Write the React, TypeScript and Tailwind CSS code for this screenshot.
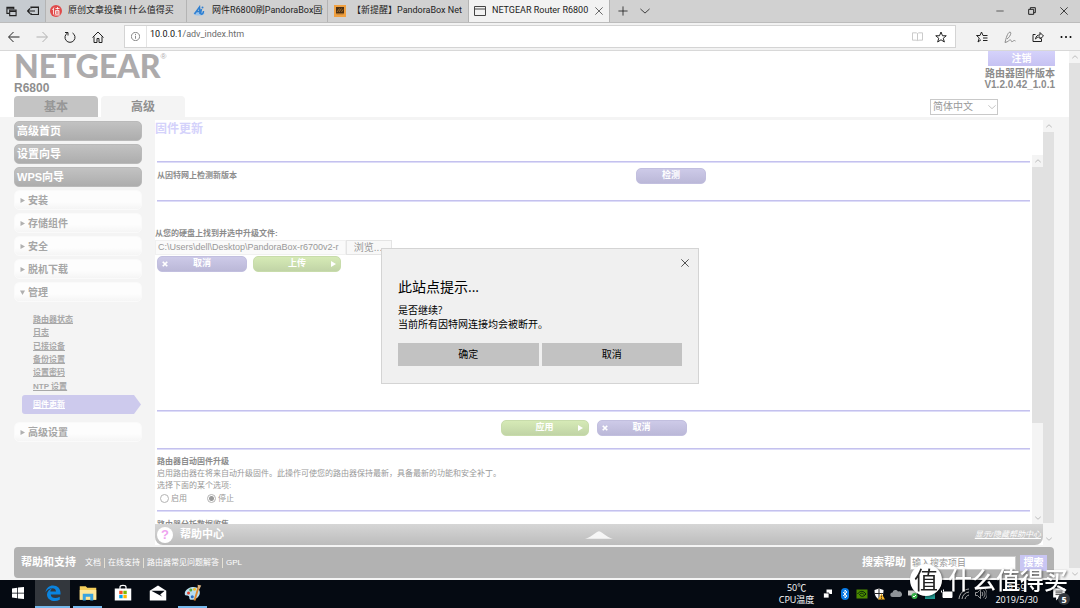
import React from "react";

const SANS = "font-['Liberation_Sans','Noto_Sans_CJK_SC',sans-serif]";
const UI = "font-['Open_Sans','Noto_Sans_CJK_SC',sans-serif]";

type IconProps = { className?: string; children: React.ReactNode; box?: string };
function Icon({ className = "", children, box = "0 0 24 24" }: IconProps) {
  return (
    <svg viewBox={box} className={`shrink-0 ${className}`} fill="none" stroke="currentColor" strokeWidth={2} aria-hidden="true">
      {children}
    </svg>
  );
}

/* ---------- browser chrome ---------- */

function Tab({ icon, title, active }: { icon: React.ReactNode; title: string; active?: boolean }) {
  return (
    <button
      className={`flex h-full w-[141px] shrink-0 items-center gap-1.5 overflow-hidden border-r border-[#b4b4b4] text-left font-['Roboto','Noto_Sans_CJK_SC',sans-serif] text-[9px] whitespace-nowrap text-[#222] ${
        active ? "bg-[#f2f2f2] pr-1.5 pl-1" : "pr-1 pl-1"
      }`}
    >
      {icon}
      <span className="min-w-0 flex-1 overflow-hidden">{title}</span>
      {active && (
        <Icon className="size-2">
          <path d="M1 1l22 22M23 1L1 23" />
        </Icon>
      )}
    </button>
  );
}

function TitleBar() {
  return (
    <div className="flex h-[23px] shrink-0 items-stretch border-b border-[#bcbcbc] bg-[#d1d1d1] text-[#222]">
      <div className="flex w-[46px] shrink-0 items-center justify-between border-r border-[#b4b4b4] bg-[#c6cbd0] px-1.5">
        <button aria-label="已搁置的标签页">
          <Icon className="size-[11px]">
            <path d="M7 16H2V3h15v4M2 6h15" strokeWidth={2.4} />
            <path d="M8 9h14v12H8zM8 12h14" strokeWidth={2.4} />
          </Icon>
        </button>
        <button aria-label="搁置标签页">
          <Icon className="size-3">
            <path d="M8 7V4h15v15H8v-3M8 5h15M16 12H1M6 7l-5 5 5 5" strokeWidth={2.4} />
          </Icon>
        </button>
      </div>
      <Tab
        title="原创文章投稿 | 什么值得买"
        icon={
          <svg viewBox="0 0 24 24" className="size-3 shrink-0" aria-hidden="true">
            <circle cx="12" cy="12" r="12" fill="#e04a4a" />
            <path d="M8 5L5 10m2-2v11M11 7h8M15 4v5M11 11h7v7h-7zM11 14h7M9 20h11" stroke="#fff" strokeWidth="1.6" fill="none" />
          </svg>
        }
      />
      <Tab
        title="网件R6800刷PandoraBox固件"
        icon={
          <svg viewBox="0 0 24 24" className="mr-px ml-0.5 size-3 shrink-0" aria-hidden="true">
            <ellipse cx="12" cy="17" rx="11" ry="4" fill="#9cc3ea" />
            <path d="M3 18L13 4l1 14M7 13h6M17 8l-2 9c3 3 6 0 6-5" stroke="#2f7fd0" strokeWidth="3" fill="none" />
            <circle cx="19" cy="5" r="2" fill="#2f7fd0" />
          </svg>
        }
      />
      <Tab
        title="【新提醒】PandoraBox Net"
        icon={
          <svg viewBox="0 0 24 24" className="ml-0.5 size-3 shrink-0" aria-hidden="true">
            <path fill="#f0a040" d="M0 0h24v24H0z" />
            <path fill="#4b3014" d="M4 4h16v13H4z" />
            <path d="M6 14l5-7m-1 7l5-7m0 7l3-5M5 19h14" stroke="#c98734" strokeWidth="1.4" />
          </svg>
        }
      />
      <Tab
        active
        title="NETGEAR Router R6800"
        icon={
          <Icon className="ml-px size-3 text-[#444]">
            <path d="M1 3h22v18H1zM1 8h22" />
          </Icon>
        }
      />
      <div className="flex items-center gap-3 px-2">
        <button aria-label="新建标签页">
          <Icon className="size-2.5">
            <path d="M12 1v22M1 12h22" />
          </Icon>
        </button>
        <button aria-label="标签页预览">
          <Icon className="size-2.5">
            <path d="M1 7l11 10L23 7" />
          </Icon>
        </button>
      </div>
      <div className="ml-auto flex items-center gap-6 pr-3">
        <button aria-label="最小化">
          <Icon className="size-2">
            <path d="M1 12h22" />
          </Icon>
        </button>
        <button aria-label="向下还原">
          <Icon className="size-2">
            <path d="M2 7h15v15H2zM7 7V2h15v15h-5" strokeWidth={3} />
          </Icon>
        </button>
        <button aria-label="关闭">
          <Icon className="size-2">
            <path d="M1 1l22 22M23 1L1 23" strokeWidth={2.5} />
          </Icon>
        </button>
      </div>
    </div>
  );
}

function Toolbar() {
  return (
    <div className="flex h-7 shrink-0 items-center border-b border-[#d8d8d8] bg-[#f2f2f2] text-[#222]">
      <div className="flex w-[124px] shrink-0 items-center gap-4 pl-2">
        <button aria-label="后退">
          <Icon className="size-3">
            <path d="M23 12H2M11 2L1 12l10 10" />
          </Icon>
        </button>
        <button aria-label="前进" className="text-[#b0b0b0]">
          <Icon className="size-3">
            <path d="M1 12h21M13 2l10 10-10 10" />
          </Icon>
        </button>
        <button aria-label="刷新">
          <Icon className="size-3">
            <path d="M7 4a10 10 0 1 0 10 0M2 3h6v6" />
          </Icon>
        </button>
        <button aria-label="主页">
          <Icon className="size-3">
            <path d="M1 13L12 2l11 11M4 11v12h6v-8h4v8h6V11" />
          </Icon>
        </button>
      </div>
      <div className="flex h-[23px] flex-1 items-center gap-1.5 border border-[#d4d4d4] bg-white pr-2 pl-1.5">
        <Icon className="size-[9px] text-[#666]">
          <circle cx="12" cy="12" r="11" />
          <path d="M12 10v8M12 5v3" />
        </Icon>
        <div className="flex h-full flex-1 items-center border-l border-[#e4e4e4] pb-1 pl-[3px] font-['Roboto',sans-serif] text-[9px] text-[#6c6c6c]">
          <span className="text-[#111]">10.0.0.1</span>/adv_index.htm
        </div>
        <button aria-label="阅读视图" className="text-[#c4c4c4]">
          <Icon className="size-[11px]">
            <path d="M1 4h9l2 2 2-2h9v16h-9l-2 2-2-2H1zM12 6v15" />
          </Icon>
        </button>
        <button aria-label="添加到收藏夹" className="ml-1.5">
          <Icon className="size-3">
            <path d="M12 2l3 7.500h7.500l-6 5 2.200 7.500L12 17.500 5.300 22l2.200-7.500-6-5H9z" />
          </Icon>
        </button>
      </div>
      <div className="flex w-[124px] shrink-0 items-center justify-between pr-2 pl-5">
        <button aria-label="收藏夹">
          <Icon className="size-3">
            <path d="M16 9h-2l-3-7-3 7H1l5.500 5L4 22l6-4.500M14 9h9M14 14h9M14 19h9" />
          </Icon>
        </button>
        <button aria-label="添加笔记" className="text-[#8c8c8c]">
          <Icon className="size-3">
            <path d="M2 23C4 15 7 3 12 2c4 1 0 10-6 14M2 23c7-1 8-6 11-5s1 5 4 3 3-3 6-1" strokeWidth={2} />
          </Icon>
        </button>
        <button aria-label="共享">
          <Icon className="size-3">
            <path d="M7 7H2v14h17v-6M7 16c1-6 4-8 9-8V3l7 7-7 6v-4c-4 0-6 1-9 4z" />
          </Icon>
        </button>
        <button aria-label="设置及更多">
          <svg viewBox="0 0 24 24" className="size-3" aria-hidden="true">
            <circle cx="3" cy="12" r="2" />
            <circle cx="12" cy="12" r="2" />
            <circle cx="21" cy="12" r="2" />
          </svg>
        </button>
      </div>
    </div>
  );
}

/* ---------- shared pieces ---------- */

function ScrollBar({ thumb, rest, className = "" }: { thumb: string; rest: string; className?: string }) {
  return (
    <div className={`flex w-[11px] shrink-0 flex-col bg-[#f4f4f4] text-[#bdbdbd] ${className}`} aria-hidden="true">
      <div className="flex h-3 items-center justify-center">
        <Icon className="size-1.5">
          <path d="M1 17L12 7l11 10" strokeWidth={4} />
        </Icon>
      </div>
      <div className={`bg-[#e1e1e1] ${thumb}`} />
      <div className={rest} />
      <div className="flex h-3 items-center justify-center">
        <Icon className="size-1.5">
          <path d="M1 7l11 10L23 7" strokeWidth={4} />
        </Icon>
      </div>
    </div>
  );
}

function PillButton({ label, tone, mark, className }: { label: string; tone: "purple" | "green"; mark?: "x" | "play"; className: string }) {
  return (
    <button
      className={`flex h-4 items-center rounded-[5px] border px-[3px] text-[9px] font-bold text-white ${
        tone === "purple"
          ? "border-[#c2bfdf] bg-linear-to-b from-[#cdcae8] to-[#bbb8d8]"
          : "border-[#c8dcab] bg-linear-to-b from-[#d6eab6] to-[#c1d4a6]"
      } ${className}`}
    >
      <span className="flex w-2 justify-center">
        {mark === "x" && (
          <Icon className="size-1.5">
            <path d="M3 3l18 18M21 3L3 21" strokeWidth={7} />
          </Icon>
        )}
      </span>
      <span className="flex-1 text-center">{label}</span>
      <span className="flex w-2 justify-center">
        {mark === "play" && (
          <svg viewBox="0 0 10 12" className="h-1.5 w-[5px]" fill="currentColor" aria-hidden="true">
            <path d="M0 0l10 6-10 6z" />
          </svg>
        )}
      </span>
    </button>
  );
}

const Rule = () => <hr className="h-0.5 shrink-0 border-0 border-t border-b border-t-[#c4c1ee] border-b-[#dddcf8]" />;

/* ---------- router page ---------- */

function RouterHeader() {
  return (
    <header className="flex h-[66px] shrink-0 justify-between bg-white pr-3.5 pl-3.5">
      <div className="flex flex-col">
        <div className="flex items-start text-[#adabac]">
          <span className="font-['Lato',sans-serif] text-[32px] leading-[30px] font-black">NETGEAR</span>
          <span className="pt-0.5 text-[8px] leading-[8px]">®</span>
        </div>
        <div className="text-[12px] leading-[14px] font-bold text-[#8f8f8f]">R6800</div>
        <nav className="mt-auto flex gap-[3px] text-[12px] font-bold">
          <a href="#basic" className="flex h-[21px] w-[84px] items-center justify-center rounded-t bg-[#c4c4c4] text-[#979797]">
            基本
          </a>
          <a href="#advanced" className="flex h-[21px] w-[84px] items-center justify-center rounded-t bg-[#f4f4f4] text-[#8f8f8f]">
            高级
          </a>
        </nav>
      </div>
      <div className="flex flex-col items-end text-[10px] leading-[11px] font-bold text-[#8c8c8c]">
        <button className="mb-0.5 h-[15px] w-[67px] bg-linear-to-b from-[#d5d2fb] to-[#c6c2f2] text-white">注销</button>
        <div>路由器固件版本</div>
        <div>V1.2.0.42_1.0.1</div>
        <div className="relative mt-auto mr-[57px] mb-0.5 flex items-center">
          <select aria-label="语言" className="h-4 w-[68px] appearance-none border border-[#c9c9c9] bg-white pl-0.5 text-[10px] leading-[14px] font-normal text-[#999] outline-none">
            <option>简体中文</option>
          </select>
          <Icon className="pointer-events-none absolute right-0.5 size-2 text-[#aaa]">
            <path d="M1 7l11 10L23 7" />
          </Icon>
        </div>
      </div>
    </header>
  );
}

function MenuItem({ label, open }: { label: string; open?: boolean }) {
  return (
    <a href="#menu" className="flex h-5 items-center gap-[3px] rounded-[5px] border border-[#fafafa] bg-linear-to-b from-[#fdfdfd] from-60% to-[#f5f5f5] pl-[5px] text-[10px] font-bold text-[#a6a6a6]">
      <svg viewBox="0 0 10 10" className="size-[5px] shrink-0" fill="#b0b0b0" aria-hidden="true">
        <path d={open ? "M0 1h10L5 10z" : "M1 0l9 5-9 5z"} />
      </svg>
      {label}
    </a>
  );
}

function Sidebar() {
  return (
    <aside className="w-[155px] shrink-0 pt-1 pr-[13px] pl-3.5">
      <nav className="flex flex-col gap-[3px]">
        {["高级首页", "设置向导", "WPS向导"].map((t) => (
          <a key={t} href="#top" className="flex h-5 items-center rounded-[5px] border border-[#bababa] bg-linear-to-b from-[#c2c2c2] to-[#adadad] pl-0.5 text-[11px] font-bold text-white">
            {t}
          </a>
        ))}
        {["安装", "存储组件", "安全", "脱机下载"].map((t) => (
          <MenuItem key={t} label={t} />
        ))}
        <MenuItem label="管理" open />
      </nav>
      <div className="grid h-[91px] grid-rows-6 pt-[11px] pl-[19px] text-[8px] leading-[13px] font-bold text-[#a8a8a8] underline">
        {["路由器状态", "日志", "已接设备", "备份设置", "设置密码", "NTP 设置"].map((t) => (
          <a key={t} href="#sub">
            {t}
          </a>
        ))}
      </div>
      <a
        href="#firmware"
        className="mt-0.5 mr-px ml-2 flex h-[19px] items-center rounded-l-[3px] bg-[#cdcaed] pl-[11px] text-[8px] font-bold text-white underline [clip-path:polygon(0_0,calc(100%-7px)_0,100%_50%,calc(100%-7px)_100%,0_100%)]"
      >
        固件更新
      </a>
      <div className="pt-2">
        <MenuItem label="高级设置" />
      </div>
    </aside>
  );
}

function FirmwarePage() {
  return (
    <div className="flex min-h-0 flex-1 text-[8px] text-[#8c8c8c]">
      <div className="flex min-w-0 flex-1 flex-col overflow-hidden pt-1.5 pr-0.5 pl-0.5">
        <Rule />
        <section className="grid h-[37px] shrink-0 grid-cols-[479fr_394fr] items-start pt-[5px]">
          <span className="leading-4 font-bold">从因特网上检测新版本</span>
          <PillButton label="检测" tone="purple" className="w-[70px]" />
        </section>
        <Rule />
        <section className="-ml-0.5 flex h-[208px] shrink-0 flex-col pt-[25px]">
          <label htmlFor="fw" className="leading-[13px] font-bold">
            从您的硬盘上找到并选中升级文件:
          </label>
          <div className="flex h-[15px]">
            <input
              id="fw"
              readOnly
              defaultValue="C:\Users\dell\Desktop\PandoraBox-r6700v2-r"
              className="w-[191px] border border-[#f0f0f0] bg-[#fafafa] pl-0.5 text-[9px] leading-[13px] text-[#999] outline-none"
            />
            <button className="w-[46px] border border-[#e4e4e4] bg-[#f8f8f8] pr-0.5 text-[10px] leading-[13px] text-[#999]">浏览...</button>
          </div>
          <div className="mt-px flex gap-1.5 pl-0.5">
            <PillButton label="取消" tone="purple" mark="x" className="w-[90px]" />
            <PillButton label="上传" tone="green" mark="play" className="w-[88px]" />
          </div>
        </section>
        <Rule />
        <section className="flex h-9 shrink-0 justify-center gap-2 pt-2">
          <PillButton label="应用" tone="green" mark="play" className="w-[88px]" />
          <PillButton label="取消" tone="purple" mark="x" className="w-[90px]" />
        </section>
        <Rule />
        <section className="flex h-[60px] shrink-0 flex-col pt-[5px]">
          <h2 className="leading-[13px] font-bold">路由器自动固件升级</h2>
          <p className="leading-[12px] text-[#999]">启用路由器在将来自动升级固件。此操作可使您的路由器保持最新，具备最新的功能和安全补丁。</p>
          <p className="leading-[12px] text-[#999]">选择下面的某个选项:</p>
          <div className="flex gap-5 pl-[3px] leading-[13px] text-[#999]">
            {["启用", "停止"].map((t, i) => (
              <label key={t} className="flex items-center gap-0.5">
                <input
                  type="radio"
                  name="auto"
                  defaultChecked={i === 1}
                  className="size-[9px] appearance-none rounded-full border border-[#b4b4b4] bg-white checked:bg-[radial-gradient(circle,#999_0_2px,#fff_3px)]"
                />
                {t}
              </label>
            ))}
          </div>
        </section>
        <Rule />
        <h2 className="shrink-0 pt-1.5 leading-[13px] font-bold">路由器分析数据收集</h2>
      </div>
      <ScrollBar thumb="grow-[257]" rest="grow-[90]" />
    </div>
  );
}

function HelpBar() {
  return (
    <div className="flex h-[21px] shrink-0 items-center rounded-b-[8px] bg-linear-to-b from-[#d6d6d6] to-[#bcbcbc] px-0.5 text-white">
      <span className="flex size-4 items-center justify-center rounded-full bg-white text-[13px] leading-none font-bold text-[#efa4f0]">?</span>
      <span className="pl-[7px] text-[11px] font-bold">帮助中心</span>
      <svg viewBox="0 0 30 8" className="mx-auto h-2 w-7" aria-hidden="true">
        <path d="M0 8C5 7.500 11 1 15 0c4 1 10 7.500 15 8z" fill="#f6f6f6" />
      </svg>
      <a href="#help" className="text-[8px] text-white italic underline">
        显示/隐藏帮助中心
      </a>
    </div>
  );
}

function SupportFooter() {
  return (
    <footer className="mr-[15px] mb-0.5 ml-3.5 flex h-[31px] shrink-0 items-center rounded-[4px] bg-[#b2b2b2] pr-[7px] pl-[7px] text-white">
      <span className="text-[11px] font-bold">帮助和支持</span>
      <nav className="flex pl-1.5 text-[8px] leading-[10px]">
        {["文档", "在线支持", "路由器常见问题解答", "GPL"].map((t, i) => (
          <a key={t} href="#support" className={`px-[3px] ${i ? "border-l border-[#e4e0d4]" : ""}`}>
            {t}
          </a>
        ))}
      </nav>
      <label htmlFor="q" className="ml-auto pr-1 text-[11px] font-bold">
        搜索帮助
      </label>
      <input id="q" placeholder="输入搜索项目" className="h-3.5 w-[106px] border border-[#ccc] bg-white pl-px text-[9px] leading-[12px] outline-none placeholder:text-[#999]" />
      <button className="ml-1 h-4 w-[27px] bg-[#c9c6f3] text-[10px] leading-4 font-bold">搜索</button>
    </footer>
  );
}

function AlertDialog() {
  return (
    <div role="dialog" aria-label="此站点提示" className={`absolute top-[197px] left-1/2 flex h-[136px] w-[318px] -translate-x-1/2 flex-col border border-[#d4d4d4] bg-[#f0f0f0] px-4 text-black ${UI}`}>
      <button aria-label="关闭" className="-mr-[9px] mt-2 self-end p-0.5 text-[#333]">
        <Icon className="size-2">
          <path d="M1 1l22 22M23 1L1 23" strokeWidth={2.5} />
        </Icon>
      </button>
      <h1 className="mt-2 text-[14px] leading-[20px]">此站点提示...</h1>
      <p className="mt-1.5 text-[10px] leading-[14px]">
        是否继续?
        <br />
        当前所有因特网连接均会被断开。
      </p>
      <div className="mt-3 grid grid-cols-2 gap-[3px] text-[10px]">
        <button className="h-[23px] bg-[#c2c2c2]">确定</button>
        <button className="h-[23px] bg-[#c2c2c2]">取消</button>
      </div>
    </div>
  );
}

/* ---------- taskbar ---------- */

function TaskButton({ label, active, running, children }: { label: string; active?: boolean; running?: boolean; children: React.ReactNode }) {
  return (
    <button aria-label={label} className={`flex h-full w-[35px] flex-col items-center ${active ? "bg-[#33373d]" : "px-[3px]"}`}>
      <span className="flex flex-1 items-center">
        <svg viewBox="0 0 24 24" className="size-[18px]" aria-hidden="true">
          {children}
        </svg>
      </span>
      <span className={`h-0.5 w-full ${running ? "bg-[#76b9ed]" : ""}`} />
    </button>
  );
}

function Taskbar() {
  return (
    <div className={`relative flex h-7 shrink-0 items-center bg-[#050a12] text-white ${UI}`}>
      <TaskButton label="开始">
        <path fill="#fff" d="M4 6l7-1v6.500H4zM12 4.800L20 4v7.500h-8zM4 12.500h7V19l-7-1zM12 12.500h8V20l-8-.8z" />
      </TaskButton>
      <TaskButton label="Microsoft Edge" active running>
        <path fill="#0a84e0" d="M2 11C3 5 7 2 12 2c6 0 10 4 10 10v2H9c0 5 7 6 12 3v4c-7 4-17 1-17-7 0-4 3-7 7-8-2 1-2.500 3-2.500 4H16c0-3-2-4.500-5-4.500-4 0-7 2-9 5.500z" />
      </TaskButton>
      <TaskButton label="文件资源管理器" running>
        <path fill="#f5cf5c" d="M1 3h8l2 2h12v16H1z" />
        <path fill="#ffe79a" d="M1 8h22v13H1z" />
        <path fill="#3ba4e0" d="M5 13h14v9h-4v-5H9v5H5z" />
      </TaskButton>
      <TaskButton label="Microsoft Store">
        <path d="M8 7V4c0-3 8-3 8 0v3" fill="none" stroke="#fff" strokeWidth="1.6" />
        <path fill="#fff" d="M1 6h22v16H1z" />
        <path fill="#f25022" d="M7 9h4.500v4.500H7z" />
        <path fill="#7fba00" d="M12.500 9H17v4.500h-4.500z" />
        <path fill="#00a4ef" d="M7 14.500h4.500V19H7z" />
        <path fill="#ffb900" d="M12.500 14.500H17V19h-4.500z" />
      </TaskButton>
      <TaskButton label="邮件">
        <path fill="#fff" d="M12 2l11 7v13H1V9z" />
        <path fill="#050a12" d="M3 9h18l-6 5 3 3z" />
      </TaskButton>
      <TaskButton label="画图" running>
        <path fill="#b9ddf0" d="M11 4c7-1 11 4 10 9s-7 9-12 8c-3-1-1-4-3-5s-5 0-5-3c0-5 5-8 10-9z" />
        <circle cx="6" cy="12" r="2" fill="#e0442e" />
        <circle cx="9" cy="8" r="2" fill="#57a639" />
        <circle cx="14" cy="7" r="2" fill="#efc52f" />
        <circle cx="11" cy="17" r="2" fill="#2b6cc4" />
        <path d="M20 2l-6 20" stroke="#e08a2e" strokeWidth="2.5" />
        <path d="M18 1l5 1-3 6z" fill="#d9b384" />
      </TaskButton>

      <div className="ml-auto flex items-center pr-3.5">
        <div className="pr-2 text-center text-[9px] leading-[12px]">
          50℃
          <br />
          CPU温度
        </div>
        <div className="flex items-center gap-[5px]">
          <svg viewBox="0 0 24 24" className="size-3" fill="#fff" aria-hidden="true">
            <path d="M9 3h11v9H9z" />
            <path d="M3 10h11v10H3z" stroke="#050a12" strokeWidth="1.5" />
          </svg>
          <svg viewBox="0 0 24 24" className="size-3" aria-hidden="true">
            <rect x="4" y="0" width="16" height="24" rx="8" fill="#0a7be6" />
            <path d="M8 8l8 8-4 4V4l4 4-8 8" fill="none" stroke="#fff" strokeWidth="1.8" />
          </svg>
          <svg viewBox="0 0 24 24" className="size-3" aria-hidden="true">
            <path fill="#4c8a00" d="M1 3h22v18H1z" />
            <path d="M3 12c5-7 12-7 17 0-5 6-10 6-13 1 3-4 7-3 9 0" stroke="#06230a" strokeWidth="2" fill="none" />
          </svg>
          <svg viewBox="0 0 24 24" className="size-3" aria-hidden="true">
            <path fill="#fff" d="M12 1l9 3c0 9-2 15-9 19C5 19 3 13 3 4z" />
            <path d="M12 1v22M3 11h18" stroke="#222" strokeWidth="2" />
            <path fill="#f7b322" d="M17 11l7 12H10z" />
            <path d="M17 15v4M17 20v2" stroke="#222" strokeWidth="1.5" />
          </svg>
          <svg viewBox="0 0 24 24" className="size-3" fill="#8f9499" aria-hidden="true">
            <path d="M5 18a4.500 4.500 0 0 1 0-9 6 6 0 0 1 11-2 5 5 0 0 1 4 11z" />
          </svg>
          <svg viewBox="0 0 24 24" className="size-3" aria-hidden="true">
            <path fill="#ccc" d="M2 5h18v10H2z" />
            <circle cx="15" cy="16" r="6" fill="#38b34a" />
            <path d="M12 16l2 2 4-4" stroke="#fff" strokeWidth="2" fill="none" />
          </svg>
          <svg viewBox="0 0 24 24" className="size-3" aria-hidden="true">
            <path fill="#1f9c94" d="M2 8h20v14H2z" />
          </svg>
          <Icon className="size-3">
            <path d="M4 8h18v11H4z" fill="#fff" />
            <path d="M1 5v4M5 3v4" />
          </Icon>
          <Icon className="size-3 text-[#aaa]">
            <path d="M2 22C3 11 11 3 22 2M8 22C9 14 14 9 22 8M14 22c1-4 4-7 8-8" />
          </Icon>
          <Icon className="size-3 text-[#bbb]">
            <path d="M1 9h4l6-6v18l-6-6H1zM14 8c2 3 2 5 0 8M17 5c4 4 4 10 0 14M20 2c6 6 6 14 0 20" strokeWidth={1.6} />
          </Icon>
        </div>
        <div className="px-2 text-center text-[9px] leading-[12px]">
          9:59
          <br />
          2019/5/30
        </div>
        <div className="relative ml-1.5 flex items-center">
          <svg viewBox="0 0 24 24" className="size-3.5" fill="#fff" aria-hidden="true">
            <path d="M2 2h20v16H12l-5 5v-5H2z" />
            <path d="M6 7h12M6 10h12M6 13h12" stroke="#333" strokeWidth="1.5" />
          </svg>
          <span className="absolute -right-1 -bottom-1 flex size-3 items-center justify-center rounded-full bg-[#33373d] text-[9px] leading-none font-bold">5</span>
        </div>
      </div>

      <div className="pointer-events-none absolute -top-4 right-3 flex items-center gap-1.5 drop-shadow-[1px_1px_1px_rgba(0,0,0,0.5)]">
        <span className="flex size-8 items-center justify-center rounded-full bg-white text-[24px] leading-none text-[#222]">值</span>
        <span className="text-[24px] leading-[32px] font-medium">什么值得买</span>
      </div>
    </div>
  );
}

export default function App() {
  return (
    <div lang="zh-CN" className={`flex h-screen flex-col overflow-hidden bg-white ${SANS}`}>
      <div className={`flex flex-col ${UI}`}>
        <TitleBar />
        <Toolbar />
      </div>
      <div className="relative flex min-h-0 flex-1">
        <div className="flex min-w-0 flex-1 flex-col bg-[#f4f4f4]">
          <RouterHeader />
          <div className="flex min-h-0 flex-1">
            <Sidebar />
            <main className="mt-[3px] mb-0.5 flex min-w-0 flex-1 flex-col bg-white">
              <h1 className="h-[35px] shrink-0 text-[12px] leading-[18px] font-bold text-[#d4d2fb]">固件更新</h1>
              <FirmwarePage />
              <HelpBar />
            </main>
            <ScrollBar thumb="grow-[39]" rest="grow" className="mt-[3px] mr-[15px] mb-0.5" />
          </div>
          <SupportFooter />
        </div>
        <ScrollBar thumb="grow" rest="" />
        <AlertDialog />
      </div>
      <Taskbar />
    </div>
  );
}
